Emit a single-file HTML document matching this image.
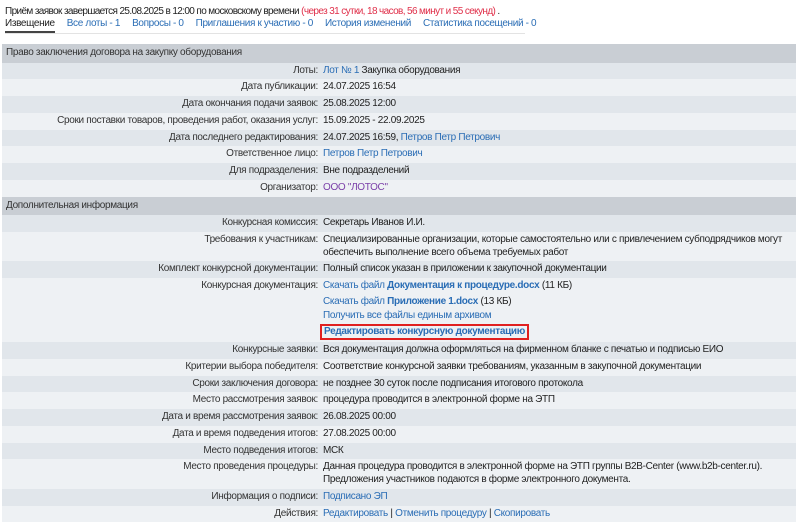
<!DOCTYPE html>
<html><head><meta charset="utf-8"><style>
body{margin:0;background:#fff;font-family:"Liberation Sans",Arial,sans-serif;font-size:10px;letter-spacing:-0.32px;color:#222;}
a{color:#2a6db5;text-decoration:none}
.top{position:absolute;left:5px;top:5px;line-height:13px;letter-spacing:-0.62px}
.red{color:#e0304a}
.tabs{position:absolute;left:5px;top:17px;width:520px;height:16px;border-bottom:1px solid #e3e3e3;line-height:14px;white-space:nowrap;letter-spacing:-0.35px}
.tabs span{display:inline-block;margin-right:12px;height:15px}
.tabs .act{border-bottom:2px solid #444;color:#222;height:14px}
table{position:absolute;left:2px;top:44px;width:794px;border-collapse:collapse}
td{padding:2px 4px 2px 3px;line-height:12.75px;vertical-align:top}
td.l{text-align:right;width:313px;color:#333;padding-right:2px}
tr.h td{background:#c9ced4;color:#333;padding:3px 4px;line-height:12.5px}
tr.d td{background:#e1e6eb}
tr.w td{background:#eef1f4}
.box{display:inline-block;border:2px solid #e02020;padding:0 2px;margin-left:-4px;font-weight:bold;line-height:12px}
b{font-weight:bold}
.org{color:#7a3fa8}
</style></head><body>
<div class="top">Приём заявок завершается 25.08.2025 в 12:00 по московскому времени <span class="red">(через 31 сутки, 18 часов, 56 минут и 55 секунд)</span> .</div>
<div class="tabs"><span class="act">Извещение</span><span><a>Все лоты - 1</a></span><span><a>Вопросы - 0</a></span><span><a>Приглашения к участию - 0</a></span><span><a>История изменений</a></span><span><a>Статистика посещений - 0</a></span></div>
<table>
<tr class="h"><td colspan="2">Право заключения договора на закупку оборудования</td></tr>
<tr class="d"><td class="l">Лоты:</td><td><a>Лот № 1</a> Закупка оборудования</td></tr>
<tr class="w"><td class="l">Дата публикации:</td><td>24.07.2025 16:54</td></tr>
<tr class="d"><td class="l">Дата окончания подачи заявок:</td><td>25.08.2025 12:00</td></tr>
<tr class="w"><td class="l">Сроки поставки товаров, проведения работ, оказания услуг:</td><td>15.09.2025 - 22.09.2025</td></tr>
<tr class="d"><td class="l">Дата последнего редактирования:</td><td>24.07.2025 16:59, <a>Петров Петр Петрович</a></td></tr>
<tr class="w"><td class="l">Ответственное лицо:</td><td><a>Петров Петр Петрович</a></td></tr>
<tr class="d"><td class="l">Для подразделения:</td><td>Вне подразделений</td></tr>
<tr class="w"><td class="l">Организатор:</td><td><a class="org">ООО "ЛОТОС"</a></td></tr>
<tr class="h"><td colspan="2">Дополнительная информация</td></tr>
<tr class="d"><td class="l">Конкурсная комиссия:</td><td>Секретарь Иванов И.И.</td></tr>
<tr class="w"><td class="l">Требования к участникам:</td><td>Специализированные организации, которые самостоятельно или с привлечением субподрядчиков могут<br>обеспечить выполнение всего объема требуемых работ</td></tr>
<tr class="d"><td class="l">Комплект конкурсной документации:</td><td>Полный список указан в приложении к закупочной документации</td></tr>
<tr class="w"><td class="l">Конкурсная документация:</td><td><div style="height:16px"><a>Скачать файл <b>Документация к процедуре.docx</b></a> (11 КБ)</div><div style="height:14px"><a>Скачать файл <b>Приложение 1.docx</b></a> (13 КБ)</div><div style="height:14px"><a>Получить все файлы единым архивом</a></div><div style="padding-left:1px"><span class="box"><a>Редактировать конкурсную документацию</a></span></div></td></tr>
<tr class="d"><td class="l">Конкурсные заявки:</td><td>Вся документация должна оформляться на фирменном бланке с печатью и подписью ЕИО</td></tr>
<tr class="w"><td class="l">Критерии выбора победителя:</td><td>Соответствие конкурсной заявки требованиям, указанным в закупочной документации</td></tr>
<tr class="d"><td class="l">Сроки заключения договора:</td><td>не позднее 30 суток после подписания итогового протокола</td></tr>
<tr class="w"><td class="l">Место рассмотрения заявок:</td><td>процедура проводится в электронной форме на ЭТП</td></tr>
<tr class="d"><td class="l">Дата и время рассмотрения заявок:</td><td>26.08.2025 00:00</td></tr>
<tr class="w"><td class="l">Дата и время подведения итогов:</td><td>27.08.2025 00:00</td></tr>
<tr class="d"><td class="l">Место подведения итогов:</td><td>МСК</td></tr>
<tr class="w"><td class="l">Место проведения процедуры:</td><td>Данная процедура проводится в электронной форме на ЭТП группы B2B-Center (www.b2b-center.ru).<br>Предложения участников подаются в форме электронного документа.</td></tr>
<tr class="d"><td class="l">Информация о подписи:</td><td><a>Подписано ЭП</a></td></tr>
<tr class="w"><td class="l">Действия:</td><td><a>Редактировать</a> | <a>Отменить процедуру</a> | <a>Скопировать</a></td></tr>
</table>
</body></html>
